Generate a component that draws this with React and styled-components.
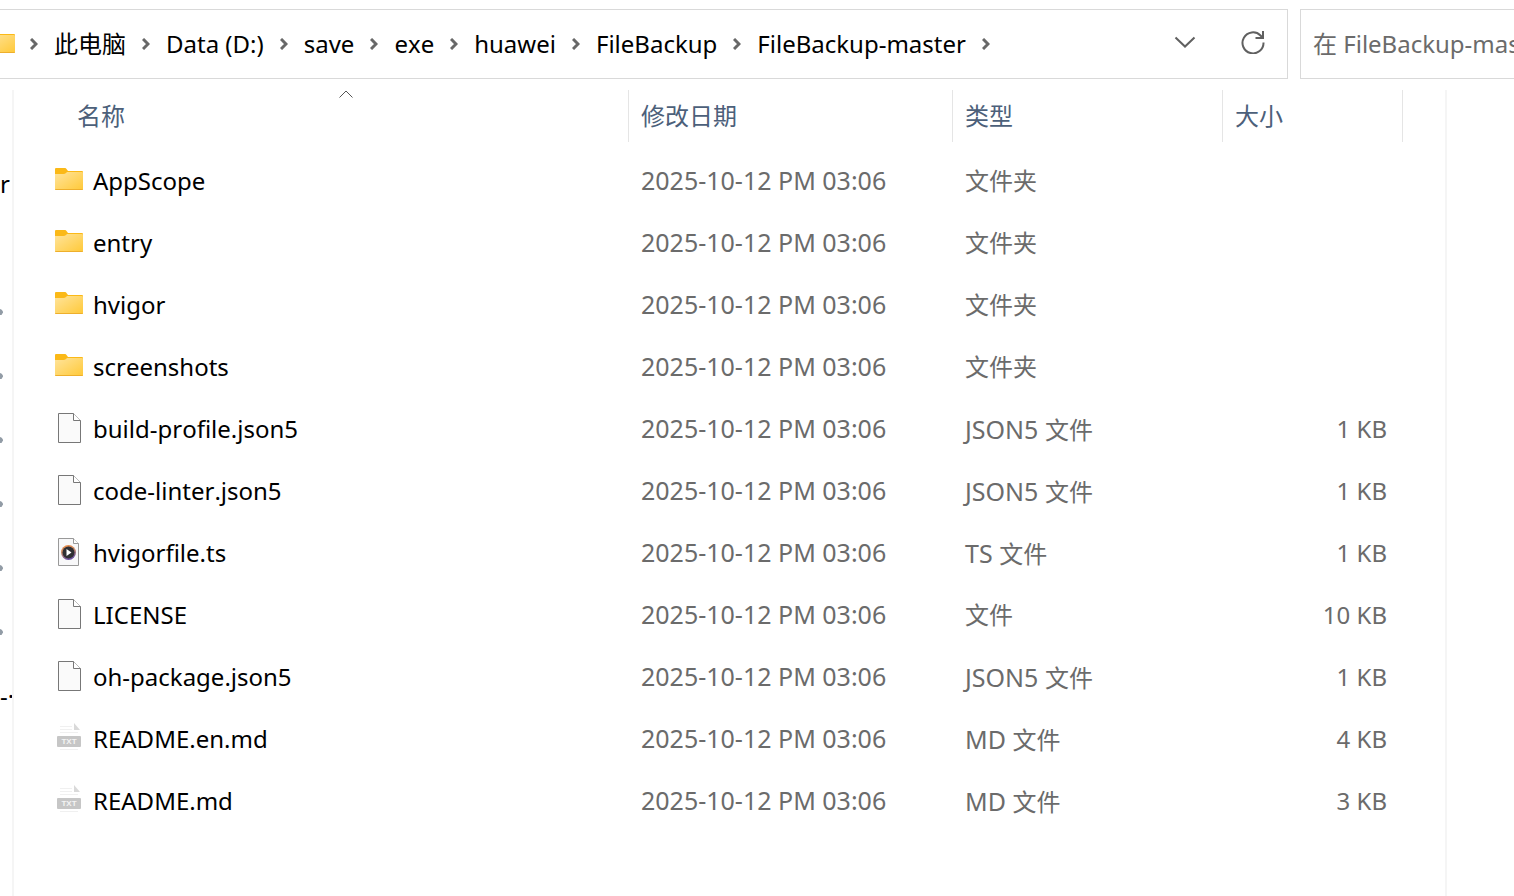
import React from "react";
import styled, { createGlobalStyle } from "styled-components";

const GlobalStyle = createGlobalStyle`
  * { box-sizing: border-box; }
  body {
    margin: 0;
    background: #fff;
    color: #000;
    font: 24px/32px "Noto Sans", "Noto Sans CJK SC", sans-serif;
    font-kerning: none;
  }
`;

const Page = styled.div`
  display: flex;
  flex-direction: column;
  min-height: 100vh;
  overflow: hidden;
`;

const TopBar = styled.header`
  display: flex;
  gap: 12px;
  padding-top: 9px;
`;

const AddressBar = styled.nav`
  flex: 1;
  min-width: 0;
  height: 70px;
  display: flex;
  align-items: center;
  padding-right: 16px;
  border: 1px solid #d9d9d9;
  border-left: 0;
`;

const LocationIcon = styled.span`
  width: 17px;
  flex: none;
  display: flex;
  justify-content: flex-end;
  overflow: hidden;
`;

const Crumbs = styled.ol`
  flex: 1;
  display: flex;
  align-items: center;
  gap: 16px;
  margin: 0;
  padding: 0 0 0 13px;
  list-style: none;
`;

const Crumb = styled.li`
  display: flex;
  align-items: center;
  gap: 16px;
  white-space: nowrap;
`;

const CrumbLink = styled.a`
  color: inherit;
  text-decoration: none;
`;

const IconButton = styled.button`
  display: flex;
  align-items: center;
  justify-content: center;
  width: 36px;
  height: 36px;
  margin-left: 32px;
  margin-bottom: 4px;
  padding: 0;
  border: 0;
  background: none;
`;

const SearchBox = styled.input`
  width: 214px;
  height: 70px;
  padding: 0 0 2px 12px;
  border: 1px solid #d9d9d9;
  border-right: 0;
  border-radius: 0;
  background: #fff;
  color: #6b6b6b;
  font: inherit;
  font-kerning: none;
  outline: 0;
  &::placeholder { color: #6b6b6b; opacity: 1; }
`;

const Body = styled.div`
  flex: 1;
  display: flex;
  margin-top: 11px;
`;

const SidePane = styled.aside`
  width: 14px;
  flex: none;
  padding-top: 62px;
  border-right: 2px solid #f5f5f5;
  overflow: hidden;
`;

const SideList = styled.ul`
  margin: 0;
  padding: 0;
  list-style: none;
`;

const SideItem = styled.li`
  height: 64px;
  display: flex;
  align-items: center;
  white-space: nowrap;
`;

const Content = styled.main`
  flex: 1;
  min-width: 0;
  padding-right: 42px;
`;

const PreviewPane = styled.aside`
  width: 69px;
  flex: none;
  border-left: 2px solid #f5f5f5;
`;

const FileTable = styled.table`
  width: 100%;
  table-layout: fixed;
  border-collapse: separate;
  border-spacing: 0;
`;

const Column = styled.col`
  width: ${(p) => p.$width || "auto"};
`;

const HeadCell = styled.th`
  position: relative;
  height: 52px;
  padding: 0 0 0 ${(p) => (p.$first ? "63px" : "12px")};
  border-right: 1px solid #e5e5e5;
  text-align: left;
  font-weight: 400;
`;

const SortButton = styled.button`
  display: block;
  padding: 0;
  border: 0;
  background: none;
  color: #4c607a;
  font: inherit;
`;

const SortMark = styled.span`
  position: absolute;
  top: 0;
  left: 50px;
  right: 0;
  display: flex;
  justify-content: center;
`;

const Spacer = styled.tbody`
  td { height: 8px; padding: 0; }
`;

const Cell = styled.td`
  height: 62px;
  padding: 0 ${(p) => (p.$end ? "16px" : "0")} 0 12px;
  color: #6b6b6b;
  text-align: ${(p) => (p.$end ? "right" : "left")};
  white-space: nowrap;
`;

const DateCell = styled(Cell)`
  padding-bottom: 2px;
  font-size: 25px;
`;

const Extension = styled.span`
  font-size: 25px;
`;

const NameCell = styled(Cell)`
  padding-left: 39px;
  color: #000;
`;

const FileName = styled.span`
  display: flex;
  align-items: center;
  gap: 8px;
`;

const Icon = styled.svg`
  display: block;
  flex: none;
`;

function FolderIcon() {
  return (
    <Icon width="32" height="32" viewBox="0 0 32 32">
      <defs>
        <linearGradient id="folder" x1="0" y1="0" x2="1" y2="1">
          <stop offset="0" stopColor="#ffe49c" />
          <stop offset="1" stopColor="#ffc938" />
        </linearGradient>
      </defs>
      <path d="M2 4q0-1 1-1h9q1 0 1.500 1l1.500 2h14q1 0 1 1v4H2z" fill="#fbb917" />
      <path d="M2 9h8.500q1.500 0 2.500-1l1-1h15q1 0 1 1V24q0 1-1 1H3q-1 0-1-1z" fill="url(#folder)" />
      <path d="M2 24h28q0 1-1 1H3q-1 0-1-1z" fill="#eeaf2c" />
    </Icon>
  );
}

function PageIcon() {
  return (
    <Icon width="32" height="32" viewBox="0 0 32 32">
      <path d="M5.500.5h15l7 7v22h-22z" fill="#fafafa" stroke="#777" />
      <path d="M20.500.5v7h7" fill="#fff" stroke="#777" />
    </Icon>
  );
}

function MediaIcon() {
  return (
    <Icon width="32" height="32" viewBox="0 0 32 32">
      <defs>
        <linearGradient id="ring" x1="0" y1="0" x2="0.300" y2="1">
          <stop offset="0" stopColor="#f08a3c" />
          <stop offset="0.500" stopColor="#c98a6a" />
          <stop offset="1" stopColor="#6b4fa0" />
        </linearGradient>
      </defs>
      <path d="M5.500 1.500h15l5 5v22h-20z" fill="#f8f8f9" stroke="#999" />
      <path d="M20.500 1.500v5h5" fill="#fff" stroke="#999" />
      <circle cx="15.500" cy="15.500" r="7.500" fill="url(#ring)" />
      <circle cx="15.500" cy="15.500" r="6" fill="#2f2f34" />
      <path d="M13.500 12v7l5-3.500z" fill="#fff" />
    </Icon>
  );
}

function TextIcon() {
  return (
    <Icon width="32" height="32" viewBox="0 0 32 32">
      <path d="M7 3.500h12M7 6.500h12M7 9.500h18M7 26.500h18" stroke="#f0f0f0" />
      <path d="M21 0l6 7h-6z" fill="#d9d9d9" />
      <rect x="4" y="13" width="24" height="11" rx="1" fill="#c6c6c6" />
      <text x="16" y="21" textAnchor="middle" fontSize="8" fontWeight="700" fontFamily="Liberation Sans, sans-serif" fill="#f4f4f4">TXT</text>
    </Icon>
  );
}

function CrumbChevron() {
  return (
    <Icon width="8" height="12" viewBox="0 0 8 12">
      <path d="M1 1l5 5-5 5" fill="none" stroke="#686868" strokeWidth="3" />
    </Icon>
  );
}

const icons = { folder: FolderIcon, page: PageIcon, media: MediaIcon, text: TextIcon };

const crumbs = ["此电脑", "Data (D:)", "save", "exe", "huawei", "FileBackup", "FileBackup-master"];

const columns = [
  { label: "名称" },
  { label: "修改日期", width: "324px" },
  { label: "类型", width: "270px" },
  { label: "大小", width: "180px" },
];

const date = "2025-10-12 PM 03:06";

const files = [
  { icon: "folder", name: "AppScope", kind: "文件夹" },
  { icon: "folder", name: "entry", kind: "文件夹" },
  { icon: "folder", name: "hvigor", kind: "文件夹" },
  { icon: "folder", name: "screenshots", kind: "文件夹" },
  { icon: "page", name: "build-profile.json5", ext: "JSON5", kind: "文件", size: "1 KB" },
  { icon: "page", name: "code-linter.json5", ext: "JSON5", kind: "文件", size: "1 KB" },
  { icon: "media", name: "hvigorfile.ts", ext: "TS", kind: "文件", size: "1 KB" },
  { icon: "page", name: "LICENSE", kind: "文件", size: "10 KB" },
  { icon: "page", name: "oh-package.json5", ext: "JSON5", kind: "文件", size: "1 KB" },
  { icon: "text", name: "README.en.md", ext: "MD", kind: "文件", size: "4 KB" },
  { icon: "text", name: "README.md", ext: "MD", kind: "文件", size: "3 KB" },
];

const sideItems = ["r", "", "pin", "pin", "pin", "pin", "pin", "pin", "-·"];

function Pin() {
  return (
    <Icon width="3" height="6" viewBox="0 0 3 6">
      <path d="M0 0q3 1 3 3.500L1.500 6H0z" fill="#929ca6" />
    </Icon>
  );
}

export default function App() {
  return (
    <>
      <GlobalStyle />
      <Page>
        <TopBar>
          <AddressBar aria-label="Address">
            <LocationIcon><FolderIcon /></LocationIcon>
            <Crumbs>
              {crumbs.map((name) => (
                <Crumb key={name}>
                  <CrumbChevron />
                  <CrumbLink href="#">{name}</CrumbLink>
                </Crumb>
              ))}
              <Crumb><CrumbChevron /></Crumb>
            </Crumbs>
            <IconButton aria-label="Recent locations">
              <Icon width="22" height="12" viewBox="0 0 22 12">
                <path d="M1.500 1.500L11 10.500l9.500-9" fill="none" stroke="#606060" strokeWidth="2" />
              </Icon>
            </IconButton>
            <IconButton aria-label="Refresh">
              <Icon width="24" height="24" viewBox="0 0 24 24">
                <path d="M22.500 12.500A10.500 10.500 0 1 1 19.500 5.500L22 8" fill="none" stroke="#606060" strokeWidth="2" />
                <path d="M22 1v7h-7.500" fill="none" stroke="#606060" strokeWidth="2" />
              </Icon>
            </IconButton>
          </AddressBar>
          <SearchBox aria-label="Search" placeholder="在 FileBackup-master 中搜索" />
        </TopBar>
        <Body>
          <SidePane>
            <SideList>
              {sideItems.map((item, i) => (
                <SideItem key={i}>{item === "pin" ? <Pin /> : item}</SideItem>
              ))}
            </SideList>
          </SidePane>
          <Content>
            <FileTable>
              <colgroup>
                {columns.map((c) => <Column key={c.label} $width={c.width} />)}
              </colgroup>
              <thead>
                <tr>
                  {columns.map((c, i) => (
                    <HeadCell key={c.label} $first={i === 0}>
                      {i === 0 && (
                        <SortMark>
                          <Icon width="14" height="8" viewBox="0 0 14 8">
                            <path d="M.5 7.500L7 1l6.500 6.500" fill="none" stroke="#555" />
                          </Icon>
                        </SortMark>
                      )}
                      <SortButton>{c.label}</SortButton>
                    </HeadCell>
                  ))}
                </tr>
              </thead>
              <Spacer aria-hidden="true"><tr><td colSpan={4} /></tr></Spacer>
              <tbody>
                {files.map((f) => {
                  const FileIcon = icons[f.icon];
                  return (
                    <tr key={f.name}>
                      <NameCell>
                        <FileName><FileIcon />{f.name}</FileName>
                      </NameCell>
                      <DateCell>{date}</DateCell>
                      <Cell>{f.ext && <Extension>{f.ext + " "}</Extension>}{f.kind}</Cell>
                      <Cell $end>{f.size}</Cell>
                    </tr>
                  );
                })}
              </tbody>
            </FileTable>
          </Content>
          <PreviewPane />
        </Body>
      </Page>
    </>
  );
}
